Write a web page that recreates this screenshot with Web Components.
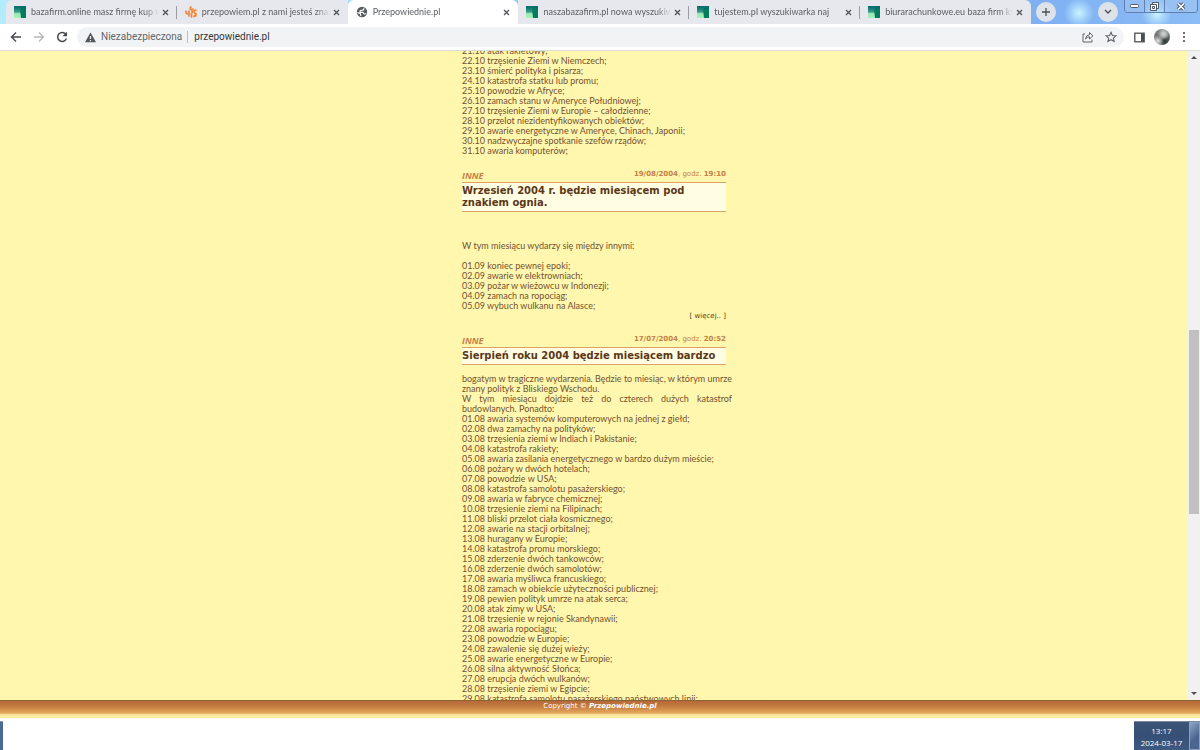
<!DOCTYPE html>
<html lang="pl">
<head>
<meta charset="utf-8">
<title>Przepowiednie.pl</title>
<style>
html,body{margin:0;height:100%}
body{font-family:"Liberation Sans",Arial,sans-serif;background:#fff;overflow:hidden}
</style>
</head>
<body>
<browser-window>
  <tab-strip slot="tabs">
    <browser-tab icon="squares" divider>bazafirm.online masz firmę kup w sieci</browser-tab>
    <browser-tab icon="flame">przepowiem.pl z nami jesteś znany w</browser-tab>
    <browser-tab icon="globe" active>Przepowiednie.pl</browser-tab>
    <browser-tab icon="squares" divider>naszabazafirm.pl nowa wyszukiwarka</browser-tab>
    <browser-tab icon="squares" divider>tujestem.pl wyszukiwarka naj</browser-tab>
    <browser-tab icon="squares">biurarachunkowe.eu baza firm księgowych</browser-tab>
  </tab-strip>
  <address-bar slot="toolbar" url="przepowiednie.pl"></address-bar>
  <news-column>
    <text-lines>21.10 atak rakietowy;
22.10 trzęsienie Ziemi w Niemczech;
23.10 śmierć polityka i pisarza;
24.10 katastrofa statku lub promu;
25.10 powodzie w Afryce;
26.10 zamach stanu w Ameryce Południowej;
27.10 trzęsienie Ziemi w Europie – całodzienne;
28.10 przelot niezidentyfikowanych obiektów;
29.10 awarie energetyczne w Ameryce, Chinach, Japonii;
30.10 nadzwyczajne spotkanie szefów rządów;
31.10 awaria komputerów;</text-lines>
    <news-article date="19/08/2004" time="19:10" more>
      <span slot="title">Wrzesień 2004 r. będzie miesiącem pod znakiem ognia.</span>
      <text-lines>

W tym miesiącu wydarzy się między innymi:

01.09 koniec pewnej epoki;
02.09 awarie w elektrowniach;
03.09 pożar w wieżowcu w Indonezji;
04.09 zamach na ropociąg;
05.09 wybuch wulkanu na Alasce;</text-lines>
    </news-article>
    <news-article date="17/07/2004" time="20:52">
      <span slot="title">Sierpień roku 2004 będzie miesiącem bardzo</span>
      <text-lines>bogatym w tragiczne wydarzenia. Będzie to miesiąc, w którym umrze znany polityk z Bliskiego Wschodu.
W tym miesiącu dojdzie też do czterech dużych katastrof budowlanych. Ponadto:
01.08 awaria systemów komputerowych na jednej z giełd;
02.08 dwa zamachy na polityków;
03.08 trzęsienia ziemi w Indiach i Pakistanie;
04.08 katastrofa rakiety;
05.08 awaria zasilania energetycznego w bardzo dużym mieście;
06.08 pożary w dwóch hotelach;
07.08 powodzie w USA;
08.08 katastrofa samolotu pasażerskiego;
09.08 awaria w fabryce chemicznej;
10.08 trzęsienie ziemi na Filipinach;
11.08 bliski przelot ciała kosmicznego;
12.08 awarie na stacji orbitalnej;
13.08 huragany w Europie;
14.08 katastrofa promu morskiego;
15.08 zderzenie dwóch tankowców;
16.08 zderzenie dwóch samolotów;
17.08 awaria myśliwca francuskiego;
18.08 zamach w obiekcie użyteczności publicznej;
19.08 pewien polityk umrze na atak serca;
20.08 atak zimy w USA;
21.08 trzęsienie w rejonie Skandynawii;
22.08 awaria ropociągu;
23.08 powodzie w Europie;
24.08 zawalenie się dużej wieży;
25.08 awarie energetyczne w Europie;
26.08 silna aktywność Słońca;
27.08 erupcja dwóch wulkanów;
28.08 trzęsienie ziemi w Egipcie;
29.08 katastrofa samolotu pasażerskiego państwowych linii;</text-lines>
    </news-article>
  </news-column>
  <site-footer slot="footer"></site-footer>
  <task-bar slot="taskbar" time="13:17" date="2024-03-17"></task-bar>
</browser-window>

<script>
const define=(name,render)=>customElements.define(name,class extends HTMLElement{
  constructor(){super();this.attachShadow({mode:'open'});}
  connectedCallback(){this.shadowRoot.innerHTML=render(this).trim();}
});

define('browser-window',()=>`
<style>
:host{display:flex;flex-direction:column;height:100vh}
.page{flex:1;min-height:0;display:flex;background:#fff7ae;border-top:1px solid #dcdcd4;box-sizing:border-box}
.scroll{flex:1;min-width:0;overflow:hidden}
</style>
<slot name="tabs"></slot><slot name="toolbar"></slot>
<div class="page"><main class="scroll"><slot></slot></main><scroll-rail></scroll-rail></div>
<slot name="footer"></slot><slot name="taskbar"></slot>`);

define('tab-strip',()=>`
<style>
:host{display:flex;height:24px;padding-left:6px;background:
 radial-gradient(circle at 1079px 13px,#c9f4ff 0,#b5e2fd99 8px,transparent 15px),
 radial-gradient(circle at 1157px 14px,#c9f4ff 0,#b5e2fd99 8px,transparent 15px),
 linear-gradient(90deg,#b5ecfd 0,#9fe0fc 30%,#84b9f6 50%,#7fb0f2 87%,#8dbdf5 100%)}
.tabs{display:flex;flex:0 1 1025px;min-width:0}
button{border:0;padding:0;display:flex;align-items:center;justify-content:center}
.round{width:20px;height:20px;border-radius:50%;background:#dee3ea;margin-top:2px;flex:none}
.new{margin-left:5px}
.search{margin-left:auto;margin-right:6px}
.win{display:flex;width:74px;height:13px;flex:none;border:1px solid #617fae;border-top:0;border-radius:0 0 4px 4px;box-sizing:border-box;margin-right:2px}
.win button{background:#a9cbf366;flex:0 0 20px;box-sizing:border-box;border-right:1px solid #617fae}
.win button:last-child{flex:1;border-right:0}
.win svg{flex:none}
</style>
<nav class="tabs"><slot></slot></nav>
<button class="round new" aria-label="Nowa karta"><svg width="10" height="10"><path d="M5 1v8M1 5h8" stroke="#4b4f54" stroke-width="1.3"/></svg></button>
<button class="round search" aria-label="Szukaj kart"><svg width="8" height="6"><path d="M1 1l3 3 3-3" fill="none" stroke="#4b4f54" stroke-width="1.3"/></svg></button>
<div class="win">
<button aria-label="Minimalizuj"><svg width="9" height="4"><rect x=".5" y=".5" width="8" height="3" rx="1" fill="#fff" stroke="#50596a"/></svg></button>
<button aria-label="Przywróć"><svg width="9" height="9"><path d="M2.5.5h6v6h-2v2h-6v-6h2z" fill="#fff" stroke="#50596a"/><path d="M.5 2.5h6v6M2.5 4.5h2v2h-2z" fill="none" stroke="#50596a"/></svg></button>
<button aria-label="Zamknij"><svg width="10" height="9"><path d="M2 1.5l6 6M8 1.5l-6 6" stroke="#50596a" stroke-width="3.6"/><path d="M2 1.5l6 6M8 1.5l-6 6" stroke="#fff" stroke-width="1.6"/></svg></button>
</div>`);

const tabIcons={
squares:`<svg width="12" height="12"><defs><linearGradient id="g" x1="0" y1="0" x2="0" y2="1"><stop offset="0" stop-color="#056f6c"/><stop offset=".45" stop-color="#3d9b8b"/><stop offset=".6" stop-color="#9ae8b4"/><stop offset="1" stop-color="#a5f4bb"/></linearGradient></defs><path d="M0 0h12v4H0z" fill="#04706a"/><path d="M0 1h7v11H0z" fill="url(#g)"/><path d="M6 3h6v9H7z" fill="#067b5e"/></svg>`,
flame:`<svg width="12" height="12" viewBox="0 0 12 12" fill="none" stroke="#f58535" stroke-width="1.7" stroke-linecap="round"><path d="M1 5v1.500q0 1.500 1.500 1.500T4 6.500V5M4 7v3M6 1q-2 1.500.5 3Q8 5.500 6.500 8v3M8 3l-1 1M11 4q-2 0-2 1.500T10.500 7.500 9 10.500M10.800 8v2"/></svg>`,
globe:`<svg width="12" height="12" viewBox="0 0 12 12"><circle cx="6" cy="6" r="5.2" fill="#565b61"/><path d="M1.400 6.400l3 1.300.4 2.500M8 2.200q0 2-2 2l-1.800.3-.2 1.700 3 .2 1 1.600 2.300-.3" fill="none" stroke="#fff" stroke-width="1.1"/></svg>`};

define('browser-tab',el=>`
<style>
:host{display:flex;flex:1 1 0;min-width:0;align-items:center;height:24px;box-sizing:border-box;padding:0 7px 0 8px;position:relative;background:#e6e8ed;font:9px/14px Lato,"Open Sans",sans-serif;color:#5b5e63}
:host(:first-child){border-radius:6px 0 0 0}
:host(:last-child){border-radius:0 6px 0 0}
:host([active]){background:#fff;border-radius:6px 6px 0 0}
:host([divider])::after{content:"";position:absolute;right:0;top:6px;width:1px;height:13px;background:#9a9da2}
svg{flex:none}
.t{flex:1;min-width:0;margin-left:5px;white-space:nowrap;overflow:hidden;-webkit-mask-image:linear-gradient(90deg,#000 calc(100% - 14px),transparent)}
button{border:0;background:none;padding:0;width:8px;height:12px;display:flex;align-items:center;margin-left:3px}
</style>
${tabIcons[el.getAttribute('icon')]}<span class="t"><slot></slot></span>
<button aria-label="Zamknij kartę"><svg width="7" height="7"><path d="M1 1l5 5M6 1l-5 5" stroke="#505359" stroke-width="1.3"/></svg></button>`);

define('address-bar',el=>`
<style>
:host{display:flex;align-items:center;height:26px;background:#fff;padding:0 9px 0 10px;box-sizing:border-box;font:10px/18px Roboto,"Open Sans",sans-serif}
button{border:0;background:none;padding:0;display:flex;flex:none}
.nav{display:flex;gap:11px;padding-right:9px}
.pill{flex:1;display:flex;align-items:center;height:20px;border-radius:10px;background:#f1f3f4;padding:0 7px 0 8px;min-width:0}
.warn{color:#62666b;margin-left:5px}
.bar{width:1px;height:12px;background:#bcbfc3;margin:0 6px 0 5px}
input{flex:1;min-width:0;border:0;background:none;padding:0;font:inherit;color:#34373b;outline:0}
.acts{display:flex;gap:11px;align-items:center}
.right{display:flex;gap:9px;align-items:center;padding-left:10px}
.me{width:16px;height:16px;border-radius:50%;background:radial-gradient(circle at 60% 30%,#d5d8d8 0,#aeb2b1 20%,transparent 42%),radial-gradient(circle at 25% 75%,#e4e4e2 0,transparent 35%),radial-gradient(circle at 65% 75%,#303633 0,#626864 40%,#8d918f 100%)}
</style>
<div class="nav">
<button aria-label="Wstecz"><svg width="12" height="12"><path d="M11 6H1.500M6 1.500L1.500 6 6 10.500" fill="none" stroke="#45494e" stroke-width="1.4"/></svg></button>
<button aria-label="Dalej"><svg width="12" height="12"><path d="M1 6h9.500M6 1.500L10.500 6 6 10.500" fill="none" stroke="#b6b8bb" stroke-width="1.4"/></svg></button>
<button aria-label="Odśwież"><svg width="12" height="12"><path d="M10 3.500A4.500 4.500 0 1 0 10.400 7.500" fill="none" stroke="#45494e" stroke-width="1.5"/><path d="M11 .8v4.500H6.500z" fill="#45494e"/></svg></button>
</div>
<div class="pill">
<svg width="11" height="11"><path d="M5.500.500L11 10.200H0z" fill="#54585c"/><path d="M5.500 4v3M5.500 8v1.200" stroke="#f1f3f4" stroke-width="1.2"/></svg>
<label class="warn" for="u">Niezabezpieczona</label><span class="bar"></span>
<input id="u" value="${el.getAttribute('url')}">
<div class="acts">
<button aria-label="Udostępnij"><svg width="12" height="12"><path d="M3 3H1v8h9V8.500" fill="none" stroke="#5f6368"/><path d="M3.500 8q.3-4 4-4.200V1.500L11 4.800 7.500 8V5.800Q5 5.800 3.500 8z" fill="none" stroke="#5f6368"/></svg></button>
<button aria-label="Dodaj do zakładek"><svg width="12" height="12"><path d="M6 1.300l1.400 3.200 3.500.3-2.600 2.300.8 3.400L6 8.700l-3.100 1.800.8-3.400L1.100 4.800l3.500-.3z" fill="none" stroke="#5f6368" stroke-width="1.1"/></svg></button>
</div></div>
<div class="right">
<button aria-label="Panel boczny"><svg width="11" height="11"><rect x=".8" y="1.2" width="9.400" height="8.600" fill="none" stroke="#4b4f54" stroke-width="1.3"/><path d="M7 1.500h3v8H7z" fill="#4b4f54"/></svg></button>
<button class="me" aria-label="Profil"></button>
<button aria-label="Menu"><svg width="12" height="12" fill="#4b4f54"><circle cx="5" cy="2" r="1.1"/><circle cx="5" cy="6" r="1.1"/><circle cx="5" cy="10" r="1.1"/></svg></button>
</div>`);

define('news-column',()=>`
<style>:host{display:block;width:264px;margin:-5px auto 0}</style><slot></slot>`);

define('text-lines',()=>`<style>:host{display:block;margin-right:-6px;white-space:pre-line;font:9px/10px Lato,"Liberation Sans",sans-serif;color:#74512f;text-align:justify}</style><slot></slot>`);

define('news-article',el=>`
<style>
:host{display:block;padding-top:10px;color:#5b3718}
header{display:flex;justify-content:space-between;height:16px;color:#c77f46;font:7px/16px "DejaVu Sans",Verdana,sans-serif}
.cat{font:italic bold 9px/20px "Open Sans",sans-serif}
h2{margin:0 0 9px;border:solid #dfa064;border-width:1px 0;background:#fffee3;padding:2px 0;font:bold 10px/12px "DejaVu Sans",Verdana,sans-serif}
footer{text-align:right;font:7px/10px "DejaVu Sans",Verdana,sans-serif}
a{color:inherit;text-decoration:none}
</style>
<article><header><span class="cat">INNE</span><span><b>${el.getAttribute('date')}</b>, godz. <b>${el.getAttribute('time')}</b></span></header>
<h2><slot name="title"></slot></h2><slot></slot>
${el.hasAttribute('more')?'<footer>[ <a href="#wiecej">więcej..</a> ]</footer>':''}</article>`);

define('scroll-rail',()=>`
<style>
:host{display:flex;flex-direction:column;width:12px;background:#f1f1f1}
svg{flex:none}
.track{flex:1;display:grid;grid-template-rows:267fr 184fr 174fr;padding:0 1px}
.thumb{grid-row:2;background:#c1c1c1}
</style>
<svg width="12" height="12"><path d="M3 8l3-3 3 3z" fill="#505050"/></svg>
<div class="track"><div class="thumb"></div></div>
<svg width="12" height="12"><path d="M3 4l3 3 3-3z" fill="#505050"/></svg>`);

define('site-footer',()=>`
<style>
:host{display:block;height:18px;box-sizing:border-box;border-top:1px solid #8d6334;text-align:center;color:#fff;font:7px/10px "DejaVu Sans",Verdana,sans-serif;background:linear-gradient(#b6693a 0,#c27a40 5px,#e5a65a 12px,#f1cf85 13px,#fbeaa2 14px,#fbeaa2 100%)}
</style><footer>Copyright © <b><i>Przepowiednie.pl</i></b></footer>`);

define('task-bar',el=>`
<style>
:host{display:flex;height:32px;background:#fff;justify-content:space-between;align-items:flex-end}
.edge{width:3px;height:29px;background:#4b6b97;border-top:1px solid #8195b2;box-sizing:border-box}
.clock{display:flex;width:66px;height:29px;box-sizing:border-box;border-top:1px solid #7b8aa2;background:linear-gradient(#3d5478,#354f76 50%,#3f5a80);color:#fff;text-align:center;font:8px/12px "Open Sans","Noto Sans",sans-serif}
time{flex:1;padding-top:3px;white-space:nowrap}
.desk{width:11px;box-sizing:border-box;border:1px solid #8ba0bd;background:linear-gradient(135deg,#8da4c4,#4a658e 60%);padding:0;flex:none}
</style>
<div class="edge"></div>
<div class="clock"><time>${el.getAttribute('time')}<br>${el.getAttribute('date')}</time><button class="desk" aria-label="Pokaż pulpit"></button></div>`);
</script>
</body>
</html>
